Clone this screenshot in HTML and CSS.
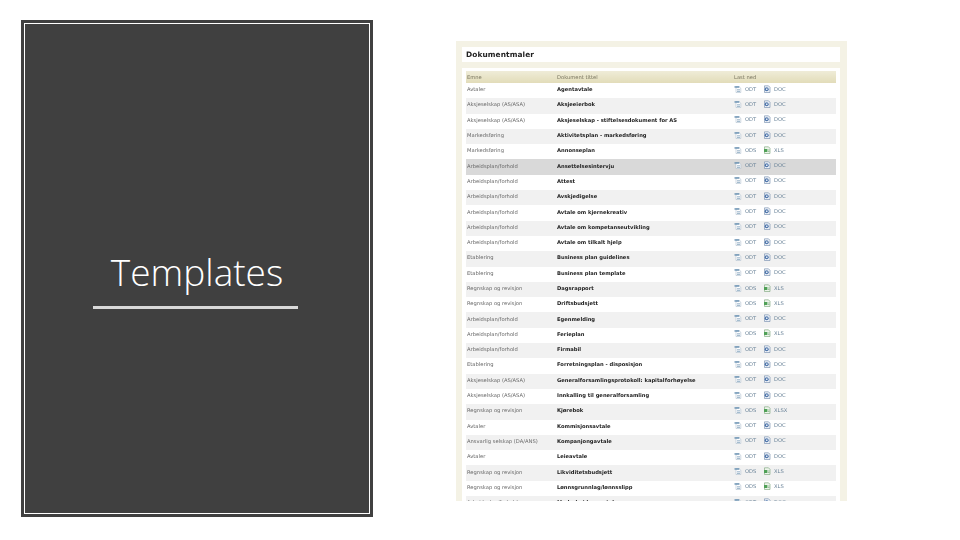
FILE: index.html
```html
<!DOCTYPE html>
<html lang="no">
<head>
<meta charset="utf-8">
<title>Templates</title>
<link rel="stylesheet" href="styles.css">
</head>
<body>
<svg class="defs" width="0" height="0" aria-hidden="true">
<symbol id="oo" viewBox="0 0 8 8"><path d="M2 2h3.500L6.800 3.200v4.300H2z" fill="#fff" stroke="#9fb2c4" stroke-width=".5"/><path d="M.5 1.300h4.800v1.300H.5z" fill="#5b87ab"/><path d="M3 4.800h3M3 6.400h3" stroke="#6f93b1" stroke-width=".7"/></symbol>
<symbol id="doc" viewBox="0 0 8 8"><path d="M1.500 .8h4L7 2.300v5.200H1.500z" fill="#eef2f8" stroke="#6d86a8" stroke-width=".6"/><circle cx="3.700" cy="4.300" r="2" fill="#4f76ab"/><path d="M3 3.600h1.500v1.400H3z" fill="#e3eaf4"/></symbol>
<symbol id="xls" viewBox="0 0 8 8"><path d="M1.500 .8h4L7 2.300v5.200H1.500z" fill="#edf5eb" stroke="#74a074" stroke-width=".6"/><path d="M1 3h3.400v3H1z" fill="#4fa056"/><path d="M5 4h1.500M5 5.500h1.500" stroke="#74a074" stroke-width=".6"/></symbol>
</svg>
<main class="slide">
  <section class="cover">
    <div class="cover-inner">
      <h1 class="cover-title">Templates</h1>
      <div class="cover-rule"></div>
    </div>
  </section>
  <section class="shot">
    <h2 class="shot-title">Dokumentmaler</h2>
    <div class="shot-body">
      <table class="docs">
        <thead><tr><th class="c1">Emne</th><th class="c2">Dokument tittel</th><th class="c3">Last ned</th></tr></thead>
        <tbody>
          <tr><td>Avtaler</td><td class="t">Agentavtale</td><td class="dl"><span class="f"><svg class="i"><use href="#oo"/></svg>ODT</span><span class="f"><svg class="i"><use href="#doc"/></svg>DOC</span></td></tr>
          <tr><td>Aksjeselskap (AS/ASA)</td><td class="t">Aksjeeierbok</td><td class="dl"><span class="f"><svg class="i"><use href="#oo"/></svg>ODT</span><span class="f"><svg class="i"><use href="#doc"/></svg>DOC</span></td></tr>
          <tr><td>Aksjeselskap (AS/ASA)</td><td class="t">Aksjeselskap - stiftelsesdokument for AS</td><td class="dl"><span class="f"><svg class="i"><use href="#oo"/></svg>ODT</span><span class="f"><svg class="i"><use href="#doc"/></svg>DOC</span></td></tr>
          <tr><td>Markedsføring</td><td class="t">Aktivitetsplan - markedsføring</td><td class="dl"><span class="f"><svg class="i"><use href="#oo"/></svg>ODT</span><span class="f"><svg class="i"><use href="#doc"/></svg>DOC</span></td></tr>
          <tr><td>Markedsføring</td><td class="t">Annonseplan</td><td class="dl"><span class="f"><svg class="i"><use href="#oo"/></svg>ODS</span><span class="f"><svg class="i"><use href="#xls"/></svg>XLS</span></td></tr>
          <tr class="hot"><td>Arbeidsplan/forhold</td><td class="t">Ansettelsesintervju</td><td class="dl"><span class="f"><svg class="i"><use href="#oo"/></svg>ODT</span><span class="f"><svg class="i"><use href="#doc"/></svg>DOC</span></td></tr>
          <tr><td>Arbeidsplan/forhold</td><td class="t">Attest</td><td class="dl"><span class="f"><svg class="i"><use href="#oo"/></svg>ODT</span><span class="f"><svg class="i"><use href="#doc"/></svg>DOC</span></td></tr>
          <tr><td>Arbeidsplan/forhold</td><td class="t">Avskjedigelse</td><td class="dl"><span class="f"><svg class="i"><use href="#oo"/></svg>ODT</span><span class="f"><svg class="i"><use href="#doc"/></svg>DOC</span></td></tr>
          <tr><td>Arbeidsplan/forhold</td><td class="t">Avtale om kjernekreativ</td><td class="dl"><span class="f"><svg class="i"><use href="#oo"/></svg>ODT</span><span class="f"><svg class="i"><use href="#doc"/></svg>DOC</span></td></tr>
          <tr><td>Arbeidsplan/forhold</td><td class="t">Avtale om kompetanseutvikling</td><td class="dl"><span class="f"><svg class="i"><use href="#oo"/></svg>ODT</span><span class="f"><svg class="i"><use href="#doc"/></svg>DOC</span></td></tr>
          <tr><td>Arbeidsplan/forhold</td><td class="t">Avtale om tilkalt hjelp</td><td class="dl"><span class="f"><svg class="i"><use href="#oo"/></svg>ODT</span><span class="f"><svg class="i"><use href="#doc"/></svg>DOC</span></td></tr>
          <tr><td>Etablering</td><td class="t">Business plan guidelines</td><td class="dl"><span class="f"><svg class="i"><use href="#oo"/></svg>ODT</span><span class="f"><svg class="i"><use href="#doc"/></svg>DOC</span></td></tr>
          <tr><td>Etablering</td><td class="t">Business plan template</td><td class="dl"><span class="f"><svg class="i"><use href="#oo"/></svg>ODT</span><span class="f"><svg class="i"><use href="#doc"/></svg>DOC</span></td></tr>
          <tr><td>Regnskap og revisjon</td><td class="t">Dagsrapport</td><td class="dl"><span class="f"><svg class="i"><use href="#oo"/></svg>ODS</span><span class="f"><svg class="i"><use href="#xls"/></svg>XLS</span></td></tr>
          <tr><td>Regnskap og revisjon</td><td class="t">Driftsbudsjett</td><td class="dl"><span class="f"><svg class="i"><use href="#oo"/></svg>ODS</span><span class="f"><svg class="i"><use href="#xls"/></svg>XLS</span></td></tr>
          <tr><td>Arbeidsplan/forhold</td><td class="t">Egenmelding</td><td class="dl"><span class="f"><svg class="i"><use href="#oo"/></svg>ODT</span><span class="f"><svg class="i"><use href="#doc"/></svg>DOC</span></td></tr>
          <tr><td>Arbeidsplan/forhold</td><td class="t">Ferieplan</td><td class="dl"><span class="f"><svg class="i"><use href="#oo"/></svg>ODS</span><span class="f"><svg class="i"><use href="#xls"/></svg>XLS</span></td></tr>
          <tr><td>Arbeidsplan/forhold</td><td class="t">Firmabil</td><td class="dl"><span class="f"><svg class="i"><use href="#oo"/></svg>ODT</span><span class="f"><svg class="i"><use href="#doc"/></svg>DOC</span></td></tr>
          <tr><td>Etablering</td><td class="t">Forretningsplan - disposisjon</td><td class="dl"><span class="f"><svg class="i"><use href="#oo"/></svg>ODT</span><span class="f"><svg class="i"><use href="#doc"/></svg>DOC</span></td></tr>
          <tr><td>Aksjeselskap (AS/ASA)</td><td class="t">Generalforsamlingsprotokoll: kapitalforhøyelse</td><td class="dl"><span class="f"><svg class="i"><use href="#oo"/></svg>ODT</span><span class="f"><svg class="i"><use href="#doc"/></svg>DOC</span></td></tr>
          <tr><td>Aksjeselskap (AS/ASA)</td><td class="t">Innkalling til generalforsamling</td><td class="dl"><span class="f"><svg class="i"><use href="#oo"/></svg>ODT</span><span class="f"><svg class="i"><use href="#doc"/></svg>DOC</span></td></tr>
          <tr><td>Regnskap og revisjon</td><td class="t">Kjørebok</td><td class="dl"><span class="f"><svg class="i"><use href="#oo"/></svg>ODS</span><span class="f"><svg class="i"><use href="#xls"/></svg>XLSX</span></td></tr>
          <tr><td>Avtaler</td><td class="t">Kommisjonsavtale</td><td class="dl"><span class="f"><svg class="i"><use href="#oo"/></svg>ODT</span><span class="f"><svg class="i"><use href="#doc"/></svg>DOC</span></td></tr>
          <tr><td>Ansvarlig selskap (DA/ANS)</td><td class="t">Kompanjongavtale</td><td class="dl"><span class="f"><svg class="i"><use href="#oo"/></svg>ODT</span><span class="f"><svg class="i"><use href="#doc"/></svg>DOC</span></td></tr>
          <tr><td>Avtaler</td><td class="t">Leieavtale</td><td class="dl"><span class="f"><svg class="i"><use href="#oo"/></svg>ODT</span><span class="f"><svg class="i"><use href="#doc"/></svg>DOC</span></td></tr>
          <tr><td>Regnskap og revisjon</td><td class="t">Likviditetsbudsjett</td><td class="dl"><span class="f"><svg class="i"><use href="#oo"/></svg>ODS</span><span class="f"><svg class="i"><use href="#xls"/></svg>XLS</span></td></tr>
          <tr><td>Regnskap og revisjon</td><td class="t">Lønnsgrunnlag/lønnsslipp</td><td class="dl"><span class="f"><svg class="i"><use href="#oo"/></svg>ODS</span><span class="f"><svg class="i"><use href="#xls"/></svg>XLS</span></td></tr>
          <tr><td>Arbeidsplan/forhold</td><td class="t">Medarbeidersamtale</td><td class="dl"><span class="f"><svg class="i"><use href="#oo"/></svg>ODT</span><span class="f"><svg class="i"><use href="#doc"/></svg>DOC</span></td></tr>
        </tbody>
      </table>
    </div>
  </section>
</main>
</body>
</html>
```
FILE: styles.css
```css
* { box-sizing: border-box; }
html, body { margin: 0; padding: 0; background: #fff; }
.defs { display: block; height: 0; }
.slide { width: 960px; height: 540px; padding: 20px 0 0 21px; display: flex; align-items: flex-start; gap: 83px; overflow: hidden; }
.cover { width: 352px; height: 497px; padding: 3px; background: #404040; flex: none; }
.cover-inner { height: 100%; border: 1.500px solid #fff; display: flex; flex-direction: column; align-items: center; padding-top: 226px; }
.cover-title { margin: 0; font: 300 37px/1.2 "Open Sans", sans-serif; color: #fff; height: 56px; }
.cover-rule { width: 205px; height: 3px; background: #d9d9d9; margin-right: 3px; }
.shot { width: 391px; height: 460px; margin-top: 21px; padding: 6px 7px 0 6px; background: #f4f2e5; overflow: hidden; font-family: "DejaVu Sans", sans-serif; filter: blur(.45px); flex: none; }
.shot-title { margin: 0 0 6px; height: 15px; background: #fff; padding-left: 4px; font-size: 7.400px; line-height: 15px; color: #222; letter-spacing: .1px; }
.shot-body { background: #fff; padding: 3px 4px 0; height: 440px; }
.docs { width: 370px; border-collapse: collapse; table-layout: fixed; font-size: 5.200px; color: #666; }
.docs th { height: 12px; padding: 0 0 0 1px; font-weight: 400; text-align: left; color: #7a7660; background: linear-gradient(#efecd8, #e2dcb9); }
.c1 { width: 90px; }
.c2 { width: 177px; }
.docs td { height: 15.300px; padding: 0 0 3px 1px; white-space: nowrap; }
.docs tbody tr:nth-child(even) { background: #f1f1f1; }
.docs tbody tr.hot { background: #d9d9d9; }
.docs .t { font-weight: 700; color: #222; }
.docs .dl { color: #6b8499; padding-left: 1px; }
.f { display: inline-flex; align-items: center; gap: 3px; width: 29px; }
.i { width: 8px; height: 8px; flex: none; }
```
